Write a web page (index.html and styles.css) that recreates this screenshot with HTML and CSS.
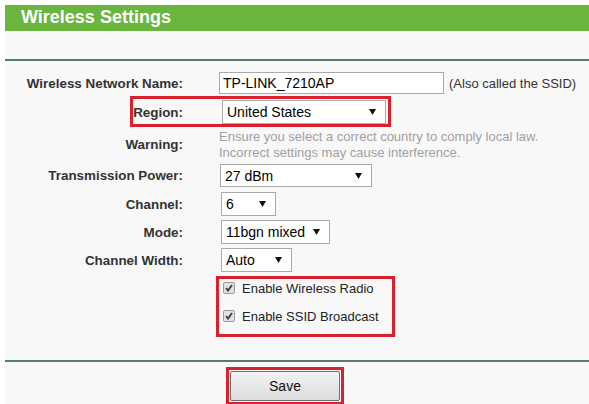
FILE: index.html
```html
<!DOCTYPE html>
<html lang="en">
<head>
    <meta charset="UTF-8">
    <title>Wireless Settings</title>
    <link rel="stylesheet" href="styles.css">
</head>
<body>
    <div class="panel">
        <div class="title">Wireless Settings</div>
        <div class="rule top-rule"></div>

        <div class="form">
            <div class="row row-ssid">
                <label class="label">Wireless Network Name:</label>
                <div class="field">
                    <input type="text" class="text-input" value="TP-LINK_7210AP">
                    <span class="hint">(Also called the SSID)</span>
                </div>
            </div>

            <div class="row row-region">
                <label class="label">Region:</label>
                <div class="field">
                    <select class="select sel-region"><option>United States</option></select>
                </div>
                <span class="mark"></span>
            </div>

            <div class="row row-warning">
                <label class="label">Warning:</label>
                <div class="field warning">
                    Ensure you select a correct country to comply local law.<br>
                    Incorrect settings may cause interference.
                </div>
            </div>

            <div class="row row-power">
                <label class="label">Transmission Power:</label>
                <div class="field">
                    <select class="select sel-power"><option>27 dBm</option></select>
                </div>
            </div>

            <div class="row">
                <label class="label">Channel:</label>
                <div class="field">
                    <select class="select sel-channel"><option>6</option></select>
                </div>
            </div>

            <div class="row">
                <label class="label">Mode:</label>
                <div class="field">
                    <select class="select sel-mode"><option>11bgn mixed</option></select>
                </div>
            </div>

            <div class="row">
                <label class="label">Channel Width:</label>
                <div class="field">
                    <select class="select sel-width"><option>Auto</option></select>
                </div>
            </div>

            <div class="checks">
                <label class="check"><input type="checkbox" checked> Enable Wireless Radio</label>
                <label class="check"><input type="checkbox" checked> Enable SSID Broadcast</label>
            </div>
        </div>

        <div class="rule"></div>
        <div class="actions">
            <span class="save-mark"><button class="save">Save</button></span>
        </div>
    </div>
</body>
</html>
```

FILE: styles.css
```css
:root {
    --green: #69b53d;
    --rule: #4f8067;
    --mark: #d8202e;
    --text: #333;
}

* {
    box-sizing: border-box;
    margin: 0;
    padding: 0;
}

body {
    font-family: 'Liberation Sans', Arial, sans-serif;
    background: #fff;
    padding: 5px 0 0 5px;
    height: 404px;
    overflow: hidden;
}

.panel {
    background: #f8f8f8;
    min-height: 399px;
}

.title {
    height: 26px;
    line-height: 25px;
    background: var(--green);
    color: #fff;
    font-size: 18px;
    font-weight: bold;
    padding-left: 16px;
}

.rule {
    height: 2px;
    background: var(--rule);
}

.top-rule {
    margin-top: 28px;
}

.form {
    padding-top: 9px;
    padding-bottom: 30px;
}

.row {
    display: flex;
    align-items: center;
    height: 28px;
    position: relative;
}

.label {
    width: 178px;
    text-align: right;
    font-size: 13.4px;
    font-weight: bold;
    color: var(--text);
}

.field {
    margin-left: 36px;
    display: flex;
    align-items: center;
    font-size: 13px;
    color: var(--text);
}

.row-ssid { height: 26px; }
.row-region { height: 32px; }
.row-warning { height: 33px; }
.row-power { height: 29px; }

.text-input {
    width: 225px;
    height: 22px;
    border: 1px solid #aaa;
    background: #fff;
    font-family: inherit;
    font-size: 14px;
    padding: 0 3px;
    color: #000;
    outline: none;
}

.hint {
    margin-left: 5px;
    color: #333;
}

.warning {
    display: block;
    color: #a0a0a0;
    line-height: 16px;
}

.select {
    appearance: none;
    -webkit-appearance: none;
    height: 24px;
    border: 1px solid #aaa;
    background: #fff url("data:image/svg+xml,%3Csvg xmlns='http://www.w3.org/2000/svg' width='7' height='6'%3E%3Cpath d='M0 0h7L3.5 6z' fill='%23111'/%3E%3C/svg%3E") no-repeat right 9px center;
    font-family: inherit;
    font-size: 14px;
    color: #000;
    padding-left: 4px;
    margin-left: 2px;
    outline: none;
}

.sel-region { width: 164px; margin-left: 3px; }
.sel-power { width: 152px; height: 23px; margin-left: 1px; }
.sel-channel { width: 55px; }
.sel-mode { width: 109px; }
.sel-width { width: 71px; }

.mark {
    position: absolute;
    left: 125px;
    top: 0;
    width: 261px;
    height: 31px;
    border: 3px solid var(--mark);
}

.checks {
    position: relative;
    margin-left: 214px;
    width: 170px;
}

.checks::after {
    content: '';
    position: absolute;
    left: -3px;
    top: 2px;
    width: 173px;
    height: 55px;
    border: 3px solid var(--mark);
}

.check {
    display: flex;
    align-items: center;
    height: 28px;
    font-size: 13px;
    color: #222;
}

.check input {
    appearance: none;
    -webkit-appearance: none;
    width: 12px;
    height: 12px;
    margin: 0 7px 0 4px;
    border: 1px solid #9a9a9a;
    border-radius: 2px;
    background: #e2e2e2 url("data:image/svg+xml,%3Csvg xmlns='http://www.w3.org/2000/svg' width='10' height='10'%3E%3Cpath d='M2 5l2 2.5L8 2' fill='none' stroke='%23444' stroke-width='2'/%3E%3C/svg%3E") no-repeat center;
}

.actions {
    padding: 5px 0 0 221px;
}

.save-mark {
    display: inline-block;
    border: 3px solid var(--mark);
    padding: 1px;
    line-height: 0;
}

.save {
    width: 110px;
    height: 30px;
    border: 1px solid #707070;
    border-radius: 2px;
    background: linear-gradient(#f3f3f3, #dcdcdc);
    font-family: inherit;
    font-size: 14px;
    line-height: normal;
    color: #111;
}
```
